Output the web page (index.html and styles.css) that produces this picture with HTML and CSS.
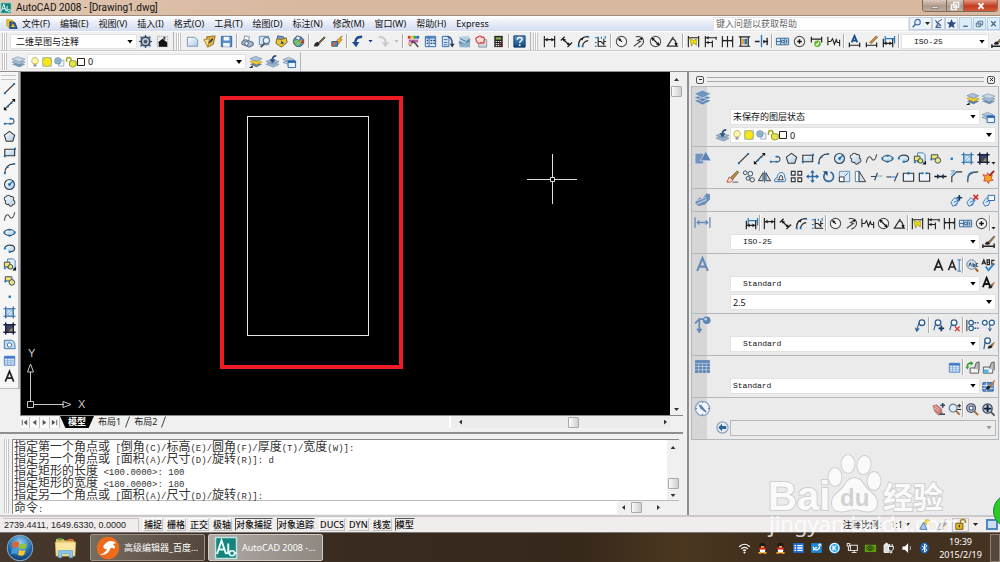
FILE: index.html
```html
<!DOCTYPE html>
<html lang="zh-CN">
<head>
<meta charset="utf-8">
<title>AutoCAD 2008 - [Drawing1.dwg]</title>
<link rel="stylesheet" href="styles.css">
</head>
<body>
<svg class="sprite" aria-hidden="true">
<defs>
<linearGradient id="g-page" x1="0" y1="0" x2="1" y2="1"><stop offset="0" stop-color="#fff"/><stop offset="1" stop-color="#a9cbe8"/></linearGradient>
<linearGradient id="g-help" x1="0" y1="0" x2="0" y2="1"><stop offset="0" stop-color="#5b9bd0"/><stop offset="1" stop-color="#0c3f78"/></linearGradient>
<radialGradient id="g-orb" cx=".5" cy=".3" r=".7"><stop offset="0" stop-color="#9ad4f2"/><stop offset=".6" stop-color="#2a6fae"/><stop offset="1" stop-color="#0d3767"/></radialGradient>
</defs>
<!-- draw -->
<symbol id="line" viewBox="0 0 16 16"><path d="M3 13 13 3" stroke="#333" stroke-width="1.3"/><path d="M2 12h2v2H2zM12 2h2v2h-2z" fill="#1673c4"/></symbol>
<symbol id="xline" viewBox="0 0 16 16"><path d="M3 13 13 3" stroke="#222" stroke-width="1.3"/><path d="M2 14v-3.500l3.500 3.500zM14 2v3.500L10.500 2z" fill="#111"/><path d="M5.500 9h2v2h-2zM9 5.500h2v2H9z" fill="#1673c4"/></symbol>
<symbol id="pline" viewBox="0 0 16 16"><path d="M3 11.500h8a3 3 0 0 0 0-5.500H9" fill="none" stroke="#456" stroke-width="1.200"/><path d="M2 10.500h2v2H2zM8 10.500h2v2H8zM8 5h2.500v2H8z" fill="#1673c4"/></symbol>
<symbol id="poly" viewBox="0 0 16 16"><path d="M8 2.500 13.500 6.500 11.500 13h-7L2.500 6.500z" fill="url(#g-page)" stroke="#333" stroke-width="1.100"/></symbol>
<symbol id="rect" viewBox="0 0 16 16"><path d="M3 4.500h10.500v7H3z" fill="url(#g-page)" stroke="#333" stroke-width="1.200"/><path d="M2 11h2v2H2zM13 3h2v2h-2z" fill="#1673c4"/></symbol>
<symbol id="arc" viewBox="0 0 16 16"><path d="M3 13C3 7 7 3 13 3" fill="none" stroke="#333" stroke-width="1.300"/><path d="M2 12h2v2H2zM12 2h2v2h-2zM5 5.500h2v2H5z" fill="#1673c4"/></symbol>
<symbol id="circ" viewBox="0 0 16 16"><circle cx="8" cy="8" r="5.300" fill="url(#g-page)" stroke="#345" stroke-width="1.200"/><path d="m8 8 3.500-3.500" stroke="#1673c4" stroke-width="1.300"/><circle cx="8" cy="8" r="1.500" fill="#1673c4"/></symbol>
<symbol id="cloud" viewBox="0 0 16 16"><path d="M4 8.500C1.500 7.500 2 4 4.500 4 5 1.800 8.500 1.800 9 3.800c3-.8 4.500 1.700 3 3.700 2.500 1 2.500 5-.5 5C10.500 14.800 7.500 14.500 7 12c-2.500.8-4.500-1.500-3-3.500z" fill="url(#g-page)" stroke="#444" stroke-width="1.100"/></symbol>
<symbol id="spline" viewBox="0 0 16 16"><path d="M2.500 12.500C3.500 5 6.500 5 8 8s4.500 2 5.500-4.500" fill="none" stroke="#555" stroke-width="1.200"/></symbol>
<symbol id="ell" viewBox="0 0 16 16"><ellipse cx="8" cy="8" rx="5.500" ry="3.200" fill="url(#g-page)" stroke="#345" stroke-width="1.200"/><path d="M1.500 7h2v2h-2zM12.500 7h2v2h-2zM7 4h2v2H7zM7 10.500h2v2H7z" fill="#1673c4"/></symbol>
<symbol id="earc" viewBox="0 0 16 16"><path d="M3 8c0-5 10.500-4.500 10.500 0 0 2-2 3.300-4.500 3.500" fill="url(#g-page)" stroke="#345" stroke-width="1.200"/><path d="M2 7h2v2H2zM7 10.500h2.500v2H7z" fill="#1673c4"/></symbol>
<symbol id="ins" viewBox="0 0 16 16"><path d="M6 2h6l2 2v8H6z" fill="#e2eef8" stroke="#4d7fae"/><path d="M2.500 5.500h6v5h-6z" fill="#f2e36b" stroke="#345"/><circle cx="9" cy="10.500" r="2.500" fill="#dfe86a" stroke="#345"/><path d="M11 14.500h4v-4z" fill="#111"/><path d="M2 11h2v2H2z" fill="#1673c4"/></symbol>
<symbol id="blk" viewBox="0 0 16 16"><path d="M3.500 4h7v4.500h-7z" fill="#f2e36b" stroke="#346"/><circle cx="10.500" cy="10" r="3" fill="#e4e87a" stroke="#346"/><path d="M2.500 8h2v2h-2z" fill="#1673c4"/></symbol>
<symbol id="pt" viewBox="0 0 16 16"><path d="M7 7h2.500v2.500H7z" fill="#1673c4"/></symbol>
<symbol id="hatch" viewBox="0 0 16 16"><path d="M4 4h8v8H4z" fill="#cfe4f4"/><path d="m4 8 4-4M4 12l8-8M8 12l4-4M4 8l4 4M8 4l4 4" stroke="#7db0da"/><path d="M4 1.500v13M12 1.500v13M1.500 4h13M1.500 12h13" stroke="#2e6a9e" stroke-width="1.300"/></symbol>
<symbol id="grad" viewBox="0 0 16 16"><path d="M4 4h8v8H4z" fill="#3f4668"/><path d="m6 12 6-6v6z" fill="#a09a55"/><path d="M4 1.500v13M12 1.500v13M1.500 4h13M1.500 12h13" stroke="#1a2440" stroke-width="1.600"/></symbol>
<symbol id="region" viewBox="0 0 16 16"><path d="M2.500 3.500H10c2.500 0 4 2 4 9H2.500z" fill="#c5dbee" stroke="#3e74a8"/><circle cx="8" cy="8.500" r="2.300" fill="#fff" stroke="#3e74a8"/></symbol>
<symbol id="table" viewBox="0 0 16 16"><path d="M2.500 3.500h11v9.500h-11z" fill="#e4effa" stroke="#4a7dc0"/><path d="M3 3.500h10.500V6H3z" fill="#3d78c8"/><path d="M6 6v7M9.500 6v7M3 8.300h10.500M3 10.600h10.500" stroke="#86aedb"/></symbol>
<symbol id="mtext" viewBox="0 0 16 16"><path d="M3.500 13.500 8 2.500l4.500 11M5 9.800h6" fill="none" stroke="#222" stroke-width="1.800"/></symbol>
<!-- modify -->
<symbol id="erase" viewBox="0 0 16 16"><path d="m6 9 7-7 1.500 1.500-6.500 8z" fill="#c98a2b" stroke="#444" stroke-width=".7"/><path d="m4.500 8.500 4 3-2.500 2.500H2z" fill="#f7ddc8" stroke="#a33" stroke-width=".8"/><path d="M8 14h6" stroke="#555"/></symbol>
<symbol id="copy" viewBox="0 0 16 16"><g fill="#e8f0f7" stroke="#345"><circle cx="4.500" cy="4" r="2"/><circle cx="10" cy="5" r="2.500"/><circle cx="7.500" cy="10" r="2"/><circle cx="12" cy="11.500" r="2.300"/></g></symbol>
<symbol id="mirror" viewBox="0 0 16 16"><path d="M6.500 4v8.500h-5zM9.500 4v8.500h5z" fill="#cfdfed" stroke="#333"/><path d="M8 2v12.500" stroke="#1673c4"/></symbol>
<symbol id="offset" viewBox="0 0 16 16"><path d="M2 13.500c-1-3 1-4 2.500-4C4 4 11 1 12.500 7v2.500c2 1 1 4 0 4z" fill="#dbe9f5" stroke="#2e75b5"/><path d="M5 11.500c1 0 2-1 2-3s3-2 3 0 0 3 1 3z" fill="#fff" stroke="#333"/></symbol>
<symbol id="array" viewBox="0 0 16 16"><path d="M2.500 2.500h4v4h-4zM9.500 2.500h4v4h-4zM2.500 9.500h4v4h-4zM9.500 9.500h4v4h-4z" fill="#f5f8fb" stroke="#333" stroke-width="1.200"/></symbol>
<symbol id="move" viewBox="0 0 16 16"><path d="M8 2.500v11M2.500 8h11" stroke="#2a6aa5" stroke-width="1.500"/><path d="m8 1 2.300 3H5.700zM8 15l2.300-3H5.700zM1 8l3-2.300v4.600zM15 8l-3-2.300v4.600z" fill="#2a6aa5"/></symbol>
<symbol id="rotate" viewBox="0 0 16 16"><path d="M5 4a5.200 5.200 0 1 0 5-.8" fill="none" stroke="#2a6aa5" stroke-width="1.800"/><path d="M2 2.500h5v5z" fill="#1d4d80"/></symbol>
<symbol id="scale" viewBox="0 0 16 16"><path d="M2.500 2.500h11v11h-11z" fill="#dbe9f5" stroke="#5b8fbf"/><path d="M2.500 8.500h5v5h-5z" fill="#fff" stroke="#333"/><path d="m8 8 3.500-3.500" stroke="#1673c4"/></symbol>
<symbol id="stretch" viewBox="0 0 16 16"><path d="M2.500 2.500h4v11h-4z" fill="#fff" stroke="#4a80b0"/><path d="m6.500 2.500 7 11h-7z" fill="#cfe0ef" stroke="#333"/></symbol>
<symbol id="trim" viewBox="0 0 16 16"><path d="M2 8h5M6 12l3-8" stroke="#345" stroke-width="1.200"/><path d="M9 7.500h6" stroke="#3b8dd3" stroke-dasharray="2 1"/></symbol>
<symbol id="extend" viewBox="0 0 16 16"><path d="M1.500 8.500h5" stroke="#345" stroke-width="1.200"/><path d="M6.500 8.500h5" stroke="#3b8dd3" stroke-width="1.200"/><path d="m10 13 4-9" stroke="#345" stroke-width="1.200"/></symbol>
<symbol id="breakpt" viewBox="0 0 16 16"><path d="M2.500 4.500h11v8.500h-11z" fill="#eef4f9" stroke="#333" stroke-width="1.200"/><path d="M7 3h2v3H7z" fill="#1673c4"/></symbol>
<symbol id="brk" viewBox="0 0 16 16"><path d="M5.500 4.500h-3V13h11V4.500h-3" fill="#eef4f9" stroke="#333" stroke-width="1.200"/><path d="M5 3.500h2v2H5zM9 3.500h2v2H9z" fill="#1673c4"/></symbol>
<symbol id="join" viewBox="0 0 16 16"><path d="M1.500 8h13" stroke="#111" stroke-width="1.600"/><path d="m7.500 8-3-3v6zM8.500 8l3-3v6z" fill="#1c3550"/></symbol>
<symbol id="chamfer" viewBox="0 0 16 16"><path d="M3 14V8l5-5h6" fill="none" stroke="#333" stroke-width="1.200"/><path d="m3 8 5-5M2 2h4L2 6" fill="none" stroke="#3b8dd3"/></symbol>
<symbol id="fillet" viewBox="0 0 16 16"><path d="M3 14v-3C3 6 6 3 14 3" fill="none" stroke="#333" stroke-width="1.200"/><path d="M3 10c0-4 2-7 7-7" fill="none" stroke="#3b8dd3" stroke-width="1.400"/></symbol>
<symbol id="explode" viewBox="0 0 16 16"><path d="m3 13 1-4-2-3 4 1 1-3 2 3 3-1-1 4 2 2-4 .5-1 3-2-3z" fill="#f1a321" stroke="#c33" stroke-width=".8"/><path d="m9 7 5-5" stroke="#922" stroke-width="2"/></symbol>
<!-- standard -->
<symbol id="new" viewBox="0 0 16 16"><path d="M2.500 3.500h8l3 3v6.500h-11z" fill="url(#g-page)" stroke="#6f93b5"/></symbol>
<symbol id="open" viewBox="0 0 16 16"><path d="m5 3 9-1-2 9-6 3z" fill="#e9b642" stroke="#8b6a1d"/><path d="m2 6 6-1-2 9z" fill="#f7e08b" stroke="#a98429"/><path d="m11 4-4 5 1 1 4-4z" fill="#345"/></symbol>
<symbol id="save" viewBox="0 0 16 16"><path d="M2.500 2.500h11v11h-11z" fill="#5b8fcb" stroke="#33629c"/><path d="M5 3h6v4H5zM4.500 9.500h7v4h-7z" fill="#eef5fb"/></symbol>
<symbol id="print" viewBox="0 0 16 16"><path d="m5 2 5 1-1 5-5-1z" fill="#fff" stroke="#7a8fa8"/><path d="m2 8 4-2 8 3v3l-4 2-8-3z" fill="#a8b8cc" stroke="#4a5f7c"/><circle cx="7" cy="10" r="2" fill="#e6edf5" stroke="#4a5f7c"/></symbol>
<symbol id="preview" viewBox="0 0 16 16"><path d="M2.500 2.500h10v9h-10z" fill="#cfe4f5" stroke="#5587b5"/><circle cx="10" cy="7" r="3.300" fill="#e9f5fd" stroke="#5c7287" stroke-width="1.200"/><path d="m8 10-4 4" stroke="#4a5560" stroke-width="2"/></symbol>
<symbol id="publish" viewBox="0 0 16 16"><path d="m4 2 6 1 3 4-5 4-5-3z" fill="#7c9cc9" stroke="#3b5a86"/><path d="m3 5 5 1 5-2 1 5-6 5-6-4z" fill="#ecc532" stroke="#826718"/><path d="m8 7 3 3-4 1z" fill="#2f5688"/></symbol>
<symbol id="globe" viewBox="0 0 16 16"><circle cx="8" cy="8" r="5.500" fill="#4f93c2" stroke="#2f5d85"/><path d="M3 8c2-1 4-4 6-2l3 1c-1 3-3 4-4 6-3-1-4-2-5-5z" fill="#7fbf5b"/><path d="m6 2 4 1-1 4-4-2z" fill="#f0f5fa" stroke="#567"/><path d="m10 9 4-4v5z" fill="#c33"/></symbol>
<symbol id="brush" viewBox="0 0 16 16"><path d="m7 9 6-6 1 1-6 6z" fill="#a07b50" stroke="#443"/><path d="M2 13c1-4 3-5 5-4l1 1c0 3-3 4-6 3z" fill="#2a2a2a"/></symbol>
<symbol id="flash" viewBox="0 0 16 16"><path d="m9 6 5-4-2 4h2L9 12l1-4H8z" fill="#f3b32b" stroke="#a06a10" stroke-width=".7"/><path d="M3 8h6v5H3z" fill="#4b8ac0" stroke="#2d5a86"/><path d="m3 13 4-4" stroke="#e05b2b" stroke-width="2"/></symbol>
<symbol id="undo" viewBox="0 0 16 16"><path d="M13 3C7 3 5 6 6 11" fill="none" stroke="#1d4f8f" stroke-width="2.600"/><path d="M2 8.500h8L6.500 14z" fill="#1d4f8f"/></symbol>
<symbol id="redo" viewBox="0 0 16 16"><path d="M3 3c6 0 8 3 7 8" fill="none" stroke="#c8c8c8" stroke-width="2"/><path d="M14 9H6.500l3.500 5z" fill="#c8c8c8"/></symbol>
<symbol id="props" viewBox="0 0 16 16"><path d="M2 2h3v3H2z" fill="#d33"/><path d="M5 2h3v3H5z" fill="#ec3"/><path d="M8 2h3v3H8z" fill="#3a3"/><path d="M11 2h3v3h-3z" fill="#36c"/><path d="M3 6h10v3H3z" fill="#c55fae"/><path d="m4 13 3-5 3 2 3 4" fill="none" stroke="#444" stroke-width="1.600"/><path d="M2 9h4v3H2z" fill="#e0b48a"/></symbol>
<symbol id="dcenter" viewBox="0 0 16 16"><path d="M2.500 2.500h11v11h-11z" fill="#dceafa" stroke="#2f66a8"/><path d="M3 3h10.500v2H3z" fill="#4f86c6"/><path d="M6.500 3v10" stroke="#2f66a8"/><path d="M4 7h1.500M4 10h1.500M8 7h2M11 7h2M8 10h2M11 10h2" stroke="#246" stroke-width="1.500"/></symbol>
<symbol id="tpal" viewBox="0 0 16 16"><path d="M2.500 2.500h7v11h-7z" fill="#dceafa" stroke="#2f66a8"/><path d="M4 6h4M4 9h4M4 11.500h4" stroke="#36a"/><path d="M8 3c4 0 5 4 5 8" fill="none" stroke="#357" stroke-width="1.500"/><path d="m10.500 10.500 5 0-2.500 4z" fill="#234"/></symbol>
<symbol id="sheet" viewBox="0 0 16 16"><path d="m2 3 11-1 1 12H6z" fill="#b9cfe0"/><path d="m2 7 6 3 6-5v4l-5 5-7-4z" fill="#6b94b4"/><path d="m2 11 12-2v5H3z" fill="#8fb0c6"/><path d="m3 5 7 3 4-3" fill="none" stroke="#4d7695"/></symbol>
<symbol id="markup" viewBox="0 0 16 16"><path d="M5 6h8.500v8H5z" fill="#cfd6de" stroke="#8b97a5"/><path d="M3 8C1 6 2 3 4 3.500 5 1.500 8 2 8 3.500c3-1 4 2 2.500 3.500C12 9 9 10.500 8 9 6 10.500 3 10 3 8z" fill="#f7dede" stroke="#d33" stroke-width="1.200"/></symbol>
<symbol id="calc" viewBox="0 0 16 16"><path d="M3.500 2h9v12h-9z" fill="#222"/><path d="M5 3.500h6V6H5z" fill="#7fae55"/><path d="M5 8h1.500M7.300 8h1.500M9.600 8h1.500M5 10.200h1.500M7.300 10.200h1.500M5 12.400h1.500M7.300 12.400h1.500" stroke="#ddd" stroke-width="1.200"/><path d="M9.600 10.200h1.500M9.600 12.400h1.500" stroke="#e33" stroke-width="1.200"/></symbol>
<symbol id="help" viewBox="0 0 16 16"><path d="M2 2h12v12H2z" fill="url(#g-help)" stroke="#0f3b6e"/><path d="M5.700 6c0-3 5-3 5-.2C10.700 7.500 8.200 7.500 8.200 9.700" fill="none" stroke="#fff" stroke-width="1.600"/><path d="M7.300 11h1.800v1.700H7.300z" fill="#fff"/></symbol>
<symbol id="gear" viewBox="0 0 16 16"><path d="M2 2h12v12H2z" fill="#b8cbe0"/><circle cx="8" cy="8" r="4.500" fill="none" stroke="#3a4654" stroke-width="1.600"/><circle cx="8" cy="8" r="2" fill="#556"/><path d="M8 1v3M8 12v3M1 8h3M12 8h3M3 3l2 2M11 11l2 2M13 3l-2 2M5 11l-2 2" stroke="#3a4654" stroke-width="1.300"/></symbol>
<symbol id="wshome" viewBox="0 0 16 16"><path d="M2.500 2.500h11v11h-11z" fill="#e9edf2" stroke="#8a95a2" stroke-dasharray="1 1"/><path d="m3 9 5-4 5 4v4.500H4V9z" fill="#111"/><path d="M9 3h2v3H9z" fill="#333"/></symbol>
<!-- dimension -->
<symbol id="dlin" viewBox="0 0 16 16"><path d="M2.500 2v12M13.500 2v12M3 6h10" stroke="#222" stroke-width="1.200"/><path d="m3 6 3-2v4zM13 6l-3-2v4z" fill="#222"/></symbol>
<symbol id="dali" viewBox="0 0 16 16"><path d="m4 5 7 7M2 7l4-4M9 14l5-5" stroke="#222" stroke-width="1.400"/><path d="m4 5 3.500.8L5 8.300zM11.500 12l-3.300-.7 2.500-2.500z" fill="#111"/></symbol>
<symbol id="darc" viewBox="0 0 16 16"><path d="M2.500 13C2.500 7 6 3 13 2.500M7 13c0-3 3-6 6-6" fill="none" stroke="#222" stroke-width="1.200"/><path d="M2 12h2v2H2zM12 2h2v2h-2zM6 12h2v2H6z" fill="#1673c4"/><path d="m5 5 3-1-1 3z" fill="#111"/></symbol>
<symbol id="dord" viewBox="0 0 16 16"><path d="M5.500 3v10h8.500M5.500 8h3l3 3V5M12 8h2" fill="none" stroke="#222" stroke-width="1.200"/><path d="M2 4h3M2 9h2M9 3v2M13 2v3M2 13h2" stroke="#1673c4" stroke-width="1.200"/></symbol>
<symbol id="drad" viewBox="0 0 16 16"><circle cx="8" cy="8" r="5.500" fill="#f4f4f4" stroke="#555" stroke-width="1.200"/><path d="M8.500 8.500 5 5" stroke="#111" stroke-width="1.200"/><path d="m4.500 4.500 3.300.8-2.400 2.400z" fill="#111"/></symbol>
<symbol id="djog" viewBox="0 0 16 16"><path d="M5 3c10-2 11 8 3 11M12 4 7 7l3 1-7 5" fill="none" stroke="#444" stroke-width="1.200"/><path d="m12.500 3.500-1 3.200-2.200-2z" fill="#111"/></symbol>
<symbol id="ddia" viewBox="0 0 16 16"><circle cx="8" cy="8" r="5.500" fill="#f4f4f4" stroke="#555" stroke-width="1.200"/><path d="m4 4 8 8" stroke="#111" stroke-width="1.200"/><path d="m4 4 3.400.8L4.800 7.400zM12 12l-3.400-.8 2.600-2.600z" fill="#111"/></symbol>
<symbol id="dang" viewBox="0 0 16 16"><path d="M9 3 2.500 13H14M7 5c3 0 5 3 5 8" fill="none" stroke="#333" stroke-width="1.300"/><path d="m12 13-2-3.500h3.500z" fill="#111"/></symbol>
<symbol id="dqk" viewBox="0 0 16 16"><path d="M2.500 2v12M13.500 2v12M3 4h10" stroke="#222" stroke-width="1.200"/><path d="m4 4 4 3 3-2v7l-3-3-2 4z" fill="#f5e400" stroke="#77701a" stroke-width=".6"/></symbol>
<symbol id="dbase" viewBox="0 0 16 16"><path d="M2.500 2v12M3 4h11M3 9h7M10 7v7M14 3v3" stroke="#222" stroke-width="1.200"/><path d="m3 4 3-1.800v3.600zM3 9l3-1.800v3.600z" fill="#222"/></symbol>
<symbol id="dcont" viewBox="0 0 16 16"><path d="M2.500 2v12M8 2v12M13.500 2v12M3 7h10" stroke="#222" stroke-width="1.200"/><path d="m5 7-2-1.500v3zM11 7l2-1.500v3zM6 7l2-1.500v3z" fill="#222"/></symbol>
<symbol id="dspace" viewBox="0 0 16 16"><path d="M2 3h12M2 13h12M4 3v10M12 3v10" stroke="#222" stroke-width="1.200"/><path d="M5 5h3v6H5z" fill="#e2a23a"/><path d="M8 5h3v6H8z" fill="#356fae"/></symbol>
<symbol id="dbrk" viewBox="0 0 16 16"><path d="M8 1v13" stroke="#2e78bd" stroke-width="1.500"/><path d="M1 8h5M10 8h5M14 4v8" stroke="#222" stroke-width="1.400"/><path d="m13 8-3-2v4z" fill="#222"/></symbol>
<symbol id="tol" viewBox="0 0 16 16"><path d="M1.500 4.500h13v7h-13z" fill="#d6e7f6" stroke="#33669b"/><path d="M6 4.500v7M10.500 4.500v7M2 8h4" stroke="#33669b"/><circle cx="8.300" cy="8" r="1.500" fill="none" stroke="#246"/><path d="M12.500 6v4" stroke="#246"/></symbol>
<symbol id="cmark" viewBox="0 0 16 16"><circle cx="8" cy="8" r="5.500" fill="#f4f4f4" stroke="#555" stroke-width="1.200"/><path d="M8 5.500v5M5.500 8h5" stroke="#111" stroke-width="1.500"/></symbol>
<symbol id="insp" viewBox="0 0 16 16"><path d="M2.500 3v6M13.500 3v6M3 5.500h10" stroke="#222" stroke-width="1.300"/><circle cx="9" cy="10.500" r="3.500" fill="#65b52c"/><path d="m7.300 10.500 1.300 1.400 2-3" fill="none" stroke="#fff" stroke-width="1.200"/></symbol>
<symbol id="djl" viewBox="0 0 16 16"><path d="M2 3v9M2 8h3l2-3 2 6 2-5 1 3h2M14.500 6v7" fill="none" stroke="#222" stroke-width="1.200"/></symbol>
<symbol id="dedit" viewBox="0 0 16 16"><path d="M5 9 8 2l3 7M6 7h4" fill="none" stroke="#17508f" stroke-width="1.900"/><path d="M2.500 9v5M13.500 9v5M3 12h10" stroke="#222" stroke-width="1.300"/></symbol>
<symbol id="dted" viewBox="0 0 16 16"><path d="m6 9 7-7 1.500 1.500L8 10z" fill="#d98b2b" stroke="#653" stroke-width=".7"/><path d="M2.500 9v5M13.500 9v5M3 12h10" stroke="#222" stroke-width="1.300"/></symbol>
<symbol id="dupd" viewBox="0 0 16 16"><path d="M4.500 2v8M14.500 2v8M5 5h9" stroke="#2e78bd" stroke-width="1.300"/><path d="M2.500 5v9M12.500 5v9M3 10h9" stroke="#222" stroke-width="1.300"/><path d="m3 10 3-2v4zM12 10l-3-2v4z" fill="#222"/></symbol>
<symbol id="dsty" viewBox="0 0 16 16"><path d="m8 8 6-6 .8 1L10 9z" fill="#a8794b" stroke="#443" stroke-width=".6"/><path d="M4 11c1-3 3-4 5-2s-2 3-5 2z" fill="#222"/><path d="M2 11v4M14 10v5M2 13h12" stroke="#222" stroke-width="1.500"/></symbol>
<!-- layers -->
<symbol id="lay" viewBox="0 0 16 16"><path d="m1 11 6-2.500 8 2.500-6 3z" fill="#7895b5"/><path d="m1 8.500 6-2.500 8 2.500-6 3z" fill="#a9bfd6" stroke="#6784a5" stroke-width=".6"/><path d="m1 5.500 6-2.500 8 2.500-6 3z" fill="#c8d7e6" stroke="#6784a5" stroke-width=".6"/></symbol>
<symbol id="laymk" viewBox="0 0 16 16"><path d="m2 11 6-2.500 7 2.500-6 3z" fill="#5e7fa5"/><path d="m2 8 6-2 7 2.500-6 3z" fill="#f1cf2e" stroke="#b29112" stroke-width=".6"/><path d="m2 5 6-2.500 7 2.500-6 3z" fill="#a9bfd6" stroke="#6784a5" stroke-width=".6"/><path d="m1 15 4-3v3z" fill="#123"/></symbol>
<symbol id="layprev" viewBox="0 0 16 16"><path d="m1 11 6-2.500 8 2.500-6 3zM1 8l6-2.500L15 8l-6 3z" fill="#9fb6cf" stroke="#6784a5" stroke-width=".6"/><path d="M12 2C9 2 8 4 8 6" fill="none" stroke="#2f5580" stroke-width="2"/><path d="M5 5.500h6L8 10z" fill="#2f5580"/></symbol>
<symbol id="layst" viewBox="0 0 16 16"><path d="m1 9 5-2 5 2-5 2zM1 6l6-2.500L13 6 7 8z" fill="#b9cbdd" stroke="#6784a5" stroke-width=".6"/><path d="M6.500 7.500h8v7h-8z" fill="#e9f3fc" stroke="#2a67a8"/><path d="M6.500 7h8v2.500h-8z" fill="#2a67a8"/></symbol>
<symbol id="bulb" viewBox="0 0 16 16"><path d="M5.500 10.500C2 7 4 2 8 2s6 5 2.500 8.500z" fill="#fdf6b4" stroke="#b5a234"/><path d="M6 11h4v3H6z" fill="#8b95a2"/></symbol>
<symbol id="sun" viewBox="0 0 16 16"><path d="M1.500 1.500h13v13h-13z" fill="#a9c9dd"/><circle cx="8" cy="8" r="6" fill="#f6e61c" stroke="#b0a322" stroke-width=".8"/></symbol>
<symbol id="vpf" viewBox="0 0 16 16"><path d="M7.500 5.500h7v8h-7z" fill="#eef2f6" stroke="#8fa3b6"/><circle cx="6.500" cy="6.500" r="4.300" fill="#aac3d6" stroke="#5e87a8"/><path d="M6.500 2v9M2 6.500h9M3.500 3.500l6 6M9.500 3.500l-6 6" stroke="#7ba3c0" stroke-width=".8"/></symbol>
<symbol id="lock" viewBox="0 0 16 16"><path d="M2 8V5c0-4 6-4 6 0v2" fill="none" stroke="#a5a51e" stroke-width="2"/><path d="m6 7 4-1 5 1v6l-5 2-4-2z" fill="#e3e04a" stroke="#848416"/></symbol>
<symbol id="swatch" viewBox="0 0 9 12"><path d="M.5 2.500h7v7h-7z" fill="#fff" stroke="#222"/></symbol>
<!-- palette headings -->
<symbol id="h-lay" viewBox="0 0 16 16"><path d="m0 11 8-3 8 3-8 4zM0 8l8-3 8 3-8 4z" fill="#5e86b0" stroke="#dfe6ee" stroke-width=".7"/><path d="m0 4.500 8-3.500 8 3.500-8 4z" fill="#6d94bd" stroke="#dfe6ee" stroke-width=".7"/></symbol>
<symbol id="h-draw" viewBox="0 0 16 16"><path d="M1 4h8v10H1z" fill="#7394bd" stroke="#dde5ee" stroke-width=".6"/><path d="m11 2 5 9H6z" fill="#5b82b3" stroke="#dde5ee" stroke-width=".6"/></symbol>
<symbol id="h-3d" viewBox="0 0 16 16"><path d="m1 11 4-5 3 1 4-5 3 1v5l-5 5-6 1z" fill="#6b8fb9"/><path d="m3 9 8-3M3 12l9-4" stroke="#c7d5e4"/></symbol>
<symbol id="h-dim" viewBox="0 0 16 16"><path d="M1 3v10M15 3v10M3 8h10M5 6 3 8l2 2M11 6l2 2-2 2" fill="none" stroke="#6489b8" stroke-width="1.200"/></symbol>
<symbol id="h-txt" viewBox="0 0 16 16"><path d="M3 14 8 2l5 12M5 10h6" fill="none" stroke="#6489b8" stroke-width="1.900"/></symbol>
<symbol id="h-ldr" viewBox="0 0 16 16"><path d="M1 7c2-2 3-3 4-4h6M5 3v11M3 12l2 3 2-3" fill="none" stroke="#6489b8" stroke-width="1.600"/><circle cx="12" cy="4" r="3.600" fill="#5f86b4"/><circle cx="11" cy="3" r="1.200" fill="#c5d6ea"/></symbol>
<symbol id="h-tbl" viewBox="0 0 16 16"><path d="M1 2h14v12H1z" fill="#5f86b4"/><path d="M4.500 5v9M8 5v9M11.500 5v9M1 5h14M1 8h14M1 11h14" stroke="#c3d1e0" stroke-width=".7"/></symbol>
<symbol id="h-nav" viewBox="0 0 16 16"><circle cx="8" cy="8" r="6.700" fill="#f2f6fa" stroke="#8ca7c4" stroke-width="1.300"/><path d="m4 4 3 1 5 6-1 1-5-4z" fill="#5b82b0"/><path d="M8 1v2M8 13v2M1 8h2M13 8h2" stroke="#6489b8"/></symbol>
<!-- palette tools -->
<symbol id="s3a" viewBox="0 0 16 16"><path d="m2 10 4-5 4 3-2 5-4 1zM5 10l6-3M6 13l5-5" fill="#dcebf8" stroke="#3a7ab5"/><path d="M11 2v6M8 5h6" stroke="#123c66" stroke-width="1.700"/></symbol>
<symbol id="s3x" viewBox="0 0 16 16"><path d="m2 10 4-5 4 3-2 5-4 1zM5 10l6-3M6 13l5-5" fill="#dcebf8" stroke="#3a7ab5"/><path d="m9 2 5 5M14 2 9 7" stroke="#d22" stroke-width="1.600"/></symbol>
<symbol id="s3w" viewBox="0 0 16 16"><path d="m2 10 4-5 4 3-2 5-4 1zM5 10l6-3" fill="#dcebf8" stroke="#3a7ab5"/><path d="M7.500 2.500h7v5.500h-7z" fill="#f3f8fd" stroke="#2a67a8"/></symbol>
<symbol id="ai" viewBox="0 0 16 16"><path d="m1.500 13 4-10 4 10M3 9.500h5" fill="none" stroke="#222" stroke-width="1.600"/><path d="M11 2h4M13 2v12M11 14h4" stroke="#2e78bd"/></symbol>
<symbol id="fabc" viewBox="0 0 16 16"><circle cx="7" cy="7" r="5" fill="#d5e6f5" stroke="#678"/><path d="M4 9 5.500 5 7 9M8.500 5v4h2V7h-2M14 6h-2v3h2" fill="none" stroke="#246"/><path d="m11 11 3 3.500" stroke="#a05a2a" stroke-width="2"/></symbol>
<symbol id="abc" viewBox="0 0 16 16"><path d="M1 7 3 2l2 5M2 5.500h2M6.500 2v5h2.500V4.500H6.500 9V2zM14.500 2.500H11.500v4h3" fill="none" stroke="#222" stroke-width="1.200"/><path d="m5 9 3 4 5-6" fill="none" stroke="#3b85c5" stroke-width="2"/></symbol>
<symbol id="asty" viewBox="0 0 16 16"><path d="m2 12 4-10 4 10M4 8.500h4" fill="none" stroke="#111" stroke-width="2"/><path d="m10 9 5-3-3 6z" fill="#a3743f"/><path d="M8 13c0-3 2-4 4-2 0 2-2 3-4 2z" fill="#222"/></symbol>
<symbol id="ldr" viewBox="0 0 16 16"><circle cx="9.500" cy="5" r="3" fill="#fff" stroke="#2b5f93" stroke-width="1.400"/><path d="M6.500 5 4 13M2.500 10.500 4 14l2.500-3" fill="none" stroke="#2b5f93" stroke-width="1.200"/></symbol>
<symbol id="ldra" viewBox="0 0 16 16"><circle cx="7.500" cy="5" r="3" fill="#fff" stroke="#2b5f93" stroke-width="1.400"/><path d="M5 6 3 13" stroke="#2b5f93" stroke-width="1.200"/><path d="M11 8v6M8 11h6" stroke="#123c66" stroke-width="1.900"/></symbol>
<symbol id="ldrx" viewBox="0 0 16 16"><circle cx="7.500" cy="5" r="3" fill="#fff" stroke="#2b5f93" stroke-width="1.400"/><path d="M5 6 3 13" stroke="#2b5f93" stroke-width="1.200"/><path d="m8.500 9 5 5M13.500 9l-5 5" stroke="#d33" stroke-width="1.500"/></symbol>
<symbol id="ldral" viewBox="0 0 16 16"><path d="M2 2v12" stroke="#222"/><circle cx="6.500" cy="5" r="2.400" fill="#fff" stroke="#2b5f93" stroke-width="1.300"/><circle cx="6.500" cy="11" r="2.400" fill="#fff" stroke="#2b5f93" stroke-width="1.300"/><path d="M10 5h2M13 5h1.500M10 11h2M13 11h1.500" stroke="#2b5f93" stroke-width="1.500"/></symbol>
<symbol id="ldrc" viewBox="0 0 16 16"><circle cx="4" cy="5" r="2.500" fill="#fff" stroke="#2b5f93" stroke-width="1.300"/><circle cx="11.500" cy="5" r="2.700" fill="#fff" stroke="#2b5f93" stroke-width="1.300"/><path d="M9.500 7v6M8 11l1.500 3 1.500-3" fill="none" stroke="#2b5f93"/></symbol>
<symbol id="ldrs" viewBox="0 0 16 16"><circle cx="7" cy="5" r="3" fill="#fff" stroke="#2b5f93" stroke-width="1.400"/><path d="M4.500 6 3 14" stroke="#2b5f93" stroke-width="1.200"/><path d="m10 9 5-3-3 6z" fill="#a3743f"/><path d="M7 13c1-3 3-4 5-2 0 2-3 3-5 2z" fill="#222"/></symbol>
<symbol id="tupd" viewBox="0 0 16 16"><path d="M5.500 8.500h9v5.500h-9z" fill="#f4f4f4" stroke="#555"/><path d="M2.500 7c0-3 2-4 4-3.500" fill="none" stroke="#2f9e2f" stroke-width="1.800"/><path d="m6 1 3 2.500L6 6zM.5 7h4l-2 3z" fill="#2f9e2f"/><path d="m10 9 2-6 3-1v9" fill="#bbb" stroke="#555"/></symbol>
<symbol id="tlnk" viewBox="0 0 16 16"><path d="M2.500 7.500h10v6.500h-10z" fill="#f4f4f4" stroke="#555"/><path d="M3 10h5v4H3z" fill="#5ab0e8"/><path d="m9 9 2-6 3-1v9" fill="#bbb" stroke="#555"/></symbol>
<symbol id="tsty" viewBox="0 0 16 16"><path d="M2 5h11v9H2z" fill="#5f93cf" stroke="#2c5c98"/><path d="M2 8h11M2 11h11M6 5v9" stroke="#dbe8f6"/><path d="m9 8 5-6 1 1-4 7z" fill="#b5793f"/><path d="M5 12c1-4 3-5 5-3 0 3-3 4-5 3z" fill="#222"/></symbol>
<symbol id="pan" viewBox="0 0 16 16"><path d="M2 4 6 3l5 4 1 5-4 2-4-4z" fill="#c97f78" stroke="#9f6a66" stroke-width=".7"/><path d="M4 4 9 8M3 6l5 4" stroke="#f1c1ba"/><path d="M12.500 1v5M10 3.500h5M9 13h6" stroke="#2d4a6b" stroke-width="1.700"/></symbol>
<symbol id="zrt" viewBox="0 0 16 16"><circle cx="6.500" cy="6.500" r="4.200" fill="#dcecf8" stroke="#678" stroke-width="1.200"/><path d="m9.500 9.500 4 4" stroke="#a9672f" stroke-width="2"/><path d="M13 2v4M11 4h4M11 8h4" stroke="#111"/></symbol>
<symbol id="zwin" viewBox="0 0 16 16"><circle cx="6.500" cy="6.500" r="4.700" fill="#b9cfe2" stroke="#445" stroke-width="1.200"/><path d="M4.500 4.500h4v4h-4z" fill="#fff" stroke="#236"/><path d="m10 10 4 4" stroke="#a9672f" stroke-width="2"/></symbol>
<symbol id="zext" viewBox="0 0 16 16"><circle cx="7" cy="7" r="5" fill="#b9cfe2" stroke="#445" stroke-width="1.200"/><path d="M7 3v8M3 7h8" stroke="#123" stroke-width="2"/><path d="m10.500 10.500 4 4" stroke="#555" stroke-width="2"/></symbol>
<symbol id="back" viewBox="0 0 16 16"><circle cx="8" cy="8" r="6" fill="#e3ebf3" stroke="#8aa0b8" stroke-width="1.200"/><path d="m3.500 8 4-4v2.500H12v3H7.500V12z" fill="#2f6296"/></symbol>
<!-- title, menu and status -->
<symbol id="acad" viewBox="0 0 16 16"><path d="M1 1h14v14H1z" fill="#15847c" stroke="#bfe5e1"/><path d="m2 12 3-9 3 9M3 9h4M9.500 5v7M8 11.500h7" fill="none" stroke="#e9fffd" stroke-width="1.300"/><circle cx="12" cy="11.500" r="1.700" fill="#15847c" stroke="#e9fffd"/></symbol>
<symbol id="dwg" viewBox="0 0 16 16"><path d="m1 2 8 1 2 4-6 7-4-4z" fill="#f0c22e" stroke="#a77c10" stroke-width=".7"/><path d="m5 5 7 1 3 8H5z" fill="#2c5f96" stroke="#173d69"/><path d="m7 12 2-5 3 5z" fill="#f0c22e"/></symbol>
<symbol id="mag" viewBox="0 0 16 16"><circle cx="9.500" cy="6" r="4" fill="#e2effa" stroke="#3b6da6" stroke-width="1.600"/><path d="m6.500 9-4 4.500" stroke="#3b6da6" stroke-width="2.200"/></symbol>
<symbol id="dish" viewBox="0 0 16 16"><path d="M3 2c1 6 4 8 9 8z" fill="#3c6aa5"/><path d="m7 8-3 6h8M7 6l6-4M4 12l8-1" fill="none" stroke="#2b4c7c" stroke-width="1.300"/></symbol>
<symbol id="star" viewBox="0 0 16 16"><path d="m8 1.500 2 4.700 5 .4-3.800 3.300L12.400 15 8 12.200 3.600 15l1.200-5.100L1 6.600l5-.4z" fill="#2d4f86"/></symbol>
<symbol id="padl" viewBox="0 0 16 16"><path d="M8 6V4c0-3 6-3 6 0v2" fill="none" stroke="#a5821d" stroke-width="1.800"/><path d="M2 6.500h9V14H2z" fill="#dfb524" stroke="#5d4808"/><path d="M6 8.500h1.300v3H6z" fill="#222"/></symbol>
<symbol id="ascale" viewBox="0 0 16 16"><path d="m2 14 5-9 4 9z" fill="#a9c7e8" stroke="#3a6fae"/><circle cx="11.500" cy="5" r="3" fill="#f7e04a" stroke="#c7a71f"/></symbol>
<symbol id="aauto" viewBox="0 0 16 16"><path d="m2 14 5-8 3 8z" fill="#dbe3ec" stroke="#8b97a8"/><path d="m8 7 5-5-1 5h2l-5 5 1-4z" fill="#b9bec6" stroke="#888"/></symbol>
<!-- taskbar -->
<symbol id="orb" viewBox="0 0 32 32"><circle cx="16" cy="16" r="14.500" fill="url(#g-orb)" stroke="#7fa7c4" stroke-width="1.200"/><path d="M8 10c3-2 5-1.500 7 0l-1 6c-2-1.500-4-1.500-7 0z" fill="#e8602c"/><path d="M16 10.500c3 1.500 5 1.500 8 0l-1.500 6c-3 1-5 1-7.500-.5z" fill="#8cc63e"/><path d="M6.800 17.500c3-1.500 5-1 7 0l-1 6c-2-1.500-4-1.500-7.500 0z" fill="#3f9be0"/><path d="M15 18c3 1.500 4.500 1.500 7.300.3l-1.600 5.700c-3 1.200-5 1-7-.4z" fill="#fbc52f"/></symbol>
<symbol id="folder" viewBox="0 0 32 32"><path d="M4 5h9l2 2h12v20H4z" fill="#e9c96a"/><path d="M6 4h6v3H6z" fill="#5ba843"/><path d="M19 5h7v3h-7z" fill="#d56b3a"/><path d="M3 9h26l-1 18H4z" fill="#f8e5a0" stroke="#d9b95a"/><path d="M7 29v-9h18v9h-4v-5H11v5z" fill="#8cc6ea" stroke="#5fa3cf"/></symbol>
<symbol id="uc" viewBox="0 0 32 32"><circle cx="16" cy="16" r="15" fill="#ee6b1c"/><path d="M5 25c5-1 8-4 10-8-4 1-6-1-5-4 4-6 12-9 17-3-2-1-4 0-4 2 3 1 3 4 1 5-2-2-4-2-5 0-2 6-7 9-14 8z" fill="#fff"/></symbol>
<symbol id="wifi" viewBox="0 0 16 16"><path d="M1.500 6.500c4-4 9-4 13 0M4 9c2.500-2.500 5.500-2.500 8 0M6.200 11.200c1.200-1 2.400-1 3.600 0" fill="none" stroke="#fff" stroke-width="1.600"/><circle cx="8" cy="13.500" r="1.200" fill="#fff"/></symbol>
<symbol id="qq" viewBox="0 0 16 16"><path d="M8 1.500c-5 0-3 5-5.500 9.500L8 14.500l5.500-3.500C11 6.500 13 1.500 8 1.500z" fill="#1a1a1a"/><ellipse cx="8" cy="10.500" rx="3.500" ry="3.500" fill="#fff"/><path d="M3.500 7.500h9V10h-9z" fill="#e02020"/><path d="M3 13h4v2H3zM9 13h4v2H9zM6 5.500h4V7H6z" fill="#f5a71c"/></symbol>
<symbol id="t-list" viewBox="0 0 16 16"><path d="M1.500 2h13v12h-13z" fill="#1f6fd4"/><path d="M3 5h2M6.500 5H13M3 8h2M6.500 8H13M3 11h2M6.500 11H13" stroke="#fff" stroke-width="1.600"/></symbol>
<symbol id="t-sync" viewBox="0 0 16 16"><path d="M1.500 2h13v12h-13z" fill="#1b87dd"/><path d="M4 6c0 6 8 6 8-1M4 11c1-3 3-4 5-3M10 5l2-2 2 2" fill="none" stroke="#fff" stroke-width="1.400"/></symbol>
<symbol id="t-k" viewBox="0 0 16 16"><circle cx="8" cy="8" r="6.800" fill="#2b9fe8"/><circle cx="8" cy="8" r="5.500" fill="none" stroke="#fff" stroke-width="1.400"/><path d="M6.200 5v6M10 5 7 8l3 3" fill="none" stroke="#fff" stroke-width="1.500"/></symbol>
<symbol id="t-net" viewBox="0 0 16 16"><path d="M5.500 4.500H14V11H5.500zM7 13.500h6M10 11v2M1.500 2.500h3v3h-3zM3 6v5h2" fill="none" stroke="#ddd" stroke-width="1.300"/></symbol>
<symbol id="t-nv" viewBox="0 0 16 16"><path d="M1 4h14v9H1z" fill="#5e9a12"/><path d="M3 8.500c2-4 7-4 9 0-2 3-6 3.500-9 0zM5 8.500c2-2 4-1 5 0-2 2-3 1-5 0" fill="none" stroke="#1f3a05" stroke-width="1.200"/></symbol>
<symbol id="t-pow" viewBox="0 0 16 16"><path d="M2.500 4h6v9.500h-6zM4.500 2h2v2h-2z" fill="#ddd" stroke="#fff"/><path d="M8 6h6v3.500l-2 1.500v3h-2v-3L8 9.500zM9.500 3v3M12.500 3v3" fill="#333" stroke="#fff" stroke-width="1.200"/></symbol>
<symbol id="t-vol" viewBox="0 0 16 16"><path d="M3 6h3l4-4v12l-4-4H3z" fill="#fff"/><path d="M12 5.500c1.300 1.500 1.300 3.500 0 5" fill="none" stroke="#ccc"/></symbol>
<symbol id="t-bt" viewBox="0 0 16 16"><ellipse cx="8" cy="8" rx="5.500" ry="7" fill="#1a5db5"/><path d="m5 5.500 6 5L8 13V3l3 2.500-6 5" fill="none" stroke="#fff" stroke-width="1.200"/></symbol>
</svg>

<header class="titlebar">
  <svg class="ico-s"><use href="#acad"/></svg>
  <h1 class="title">AutoCAD 2008 - [Drawing1.dwg]</h1>
  <div class="winbtns">
    <button class="wb" aria-label="最小化"><svg viewBox="0 0 16 12"><path d="M4 7h8v2H4z" fill="#fff" stroke="#555" stroke-width=".7"/></svg></button>
    <button class="wb wb-mid" aria-label="还原"><svg viewBox="0 0 16 12"><path d="M6.500 1.500h6v6h-6zM3.500 4.500h6v6h-6z" fill="#bbb" stroke="#fff" stroke-width="1.400"/></svg></button>
    <button class="wb wb-close" aria-label="关闭"><svg viewBox="0 0 16 12"><path d="m5 2.500 6 7M11 2.500l-6 7" stroke="#fff" stroke-width="2.300"/></svg></button>
  </div>
</header>

<nav class="menubar">
  <svg class="ico-s"><use href="#dwg"/></svg>
  <button>文件(F)</button><button>编辑(E)</button><button>视图(V)</button><button>插入(I)</button><button>格式(O)</button><button>工具(T)</button><button>绘图(D)</button><button>标注(N)</button><button>修改(M)</button><button>窗口(W)</button><button>帮助(H)</button><button>Express</button>
  <div class="search">
    <input type="text" aria-label="键入问题以获取帮助" placeholder="键入问题以获取帮助">
    <button class="sb sb-wide" aria-label="搜索"><svg class="ico-s"><use href="#mag"/></svg><i class="caret-s"></i></button>
    <button class="sb" aria-label="通讯中心"><svg class="ico-s"><use href="#dish"/></svg></button>
    <button class="sb" aria-label="收藏夹"><svg class="ico-s"><use href="#star"/></svg></button>
    <button class="sb mdi" aria-label="最小化图形"><svg viewBox="0 0 12 12"><path d="M3.500 9h5" stroke="#4a6a8a" stroke-width="1.500"/></svg></button>
    <button class="sb mdi" aria-label="还原图形"><svg viewBox="0 0 12 12"><path d="M4.500 3.500h5v4h-5zM2.500 5.500h5v4h-5z" fill="#e3f1fb" stroke="#4a6a8a"/></svg></button>
    <button class="sb mdi" aria-label="关闭图形"><svg viewBox="0 0 12 12"><path d="m3.500 3.500 5 5.500M8.500 3.500l-5 5.500" stroke="#4a6a8a" stroke-width="1.400"/></svg></button>
  </div>
</nav>

<div class="bars">
  <div class="bar">
    <i class="grip"></i>
    <label class="combo combo-ws"><select aria-label="工作空间"><option>二维草图与注释</option></select></label>
    <button aria-label="工作空间设置"><svg><use href="#gear"/></svg></button><button aria-label="我的工作空间"><svg><use href="#wshome"/></svg></button>
  </div>
  <div class="bar">
    <i class="grip"></i>
    <button aria-label="新建"><svg><use href="#new"/></svg></button><button aria-label="打开"><svg><use href="#open"/></svg></button><button aria-label="保存"><svg><use href="#save"/></svg></button><i class="sep"></i><button aria-label="打印"><svg><use href="#print"/></svg></button><button aria-label="打印预览"><svg><use href="#preview"/></svg></button><button aria-label="发布"><svg><use href="#publish"/></svg></button><button aria-label="三维DWF"><svg><use href="#globe"/></svg></button><i class="sep"></i><button aria-label="特性匹配"><svg><use href="#brush"/></svg></button><button aria-label="块编辑器"><svg><use href="#flash"/></svg></button><i class="sep"></i><button aria-label="放弃"><svg><use href="#undo"/></svg></button><button class="drop" aria-label="放弃列表"><i class="caret-s blue"></i></button><button aria-label="重做"><svg><use href="#redo"/></svg></button><button class="drop" aria-label="重做列表"><i class="caret-s dim"></i></button><i class="sep"></i><button aria-label="特性"><svg><use href="#props"/></svg></button><button aria-label="设计中心"><svg><use href="#dcenter"/></svg></button><button aria-label="工具选项板"><svg><use href="#tpal"/></svg></button><button aria-label="图纸集"><svg><use href="#sheet"/></svg></button><button aria-label="标记集"><svg><use href="#markup"/></svg></button><button aria-label="计算器"><svg><use href="#calc"/></svg></button><i class="sep"></i><button aria-label="帮助"><svg><use href="#help"/></svg></button>
  </div>
  <div class="bar bar-last">
    <i class="grip"></i>
    <button aria-label="线性"><svg><use href="#dlin"/></svg></button><button aria-label="对齐"><svg><use href="#dali"/></svg></button><button aria-label="弧长"><svg><use href="#darc"/></svg></button><button aria-label="坐标"><svg><use href="#dord"/></svg></button><i class="sep"></i><button aria-label="半径"><svg><use href="#drad"/></svg></button><button aria-label="折弯"><svg><use href="#djog"/></svg></button><button aria-label="直径"><svg><use href="#ddia"/></svg></button><button aria-label="角度"><svg><use href="#dang"/></svg></button><i class="sep"></i><button aria-label="快速标注"><svg><use href="#dqk"/></svg></button><button aria-label="基线"><svg><use href="#dbase"/></svg></button><button aria-label="连续"><svg><use href="#dcont"/></svg></button><button aria-label="标注间距"><svg><use href="#dspace"/></svg></button><button aria-label="标注打断"><svg><use href="#dbrk"/></svg></button><i class="sep"></i><button aria-label="公差"><svg><use href="#tol"/></svg></button><button aria-label="圆心标记"><svg><use href="#cmark"/></svg></button><button aria-label="检验"><svg><use href="#insp"/></svg></button><button aria-label="折弯线性"><svg><use href="#djl"/></svg></button><i class="sep"></i><button aria-label="编辑标注"><svg><use href="#dedit"/></svg></button><button aria-label="编辑标注文字"><svg><use href="#dted"/></svg></button><button aria-label="标注更新"><svg><use href="#dupd"/></svg></button><i class="sep"></i>
    <label class="combo combo-dim mono indent"><select aria-label="标注样式"><option>ISO-25</option></select></label>
    <button aria-label="标注样式管理"><svg><use href="#dsty"/></svg></button>
  </div>
</div>

<div class="bars bars-2">
  <div class="bar">
    <i class="grip"></i>
    <button aria-label="图层特性"><svg><use href="#lay"/></svg></button>
    <label class="combo combo-lay"><svg><use href="#bulb"/></svg><svg><use href="#sun"/></svg><svg><use href="#vpf"/></svg><svg><use href="#lock"/></svg><svg class="sw"><use href="#swatch"/></svg><select aria-label="图层"><option>0</option></select></label>
    <button aria-label="置为当前"><svg><use href="#laymk"/></svg></button><button aria-label="上一个图层"><svg><use href="#layprev"/></svg></button><button aria-label="图层状态"><svg><use href="#layst"/></svg></button>
  </div>
</div>

<main class="main">
  <div class="left">
    <div class="work">
      <div class="drawbar">
        <i class="grip-h"></i>
        <button aria-label="直线"><svg><use href="#line"/></svg></button><button aria-label="构造线"><svg><use href="#xline"/></svg></button><button aria-label="多段线"><svg><use href="#pline"/></svg></button><button aria-label="正多边形"><svg><use href="#poly"/></svg></button><button aria-label="矩形"><svg><use href="#rect"/></svg></button><button aria-label="圆弧"><svg><use href="#arc"/></svg></button><button aria-label="圆"><svg><use href="#circ"/></svg></button><button aria-label="修订云线"><svg><use href="#cloud"/></svg></button><button aria-label="样条曲线"><svg><use href="#spline"/></svg></button><button aria-label="椭圆"><svg><use href="#ell"/></svg></button><button aria-label="椭圆弧"><svg><use href="#earc"/></svg></button><button aria-label="插入块"><svg><use href="#ins"/></svg></button><button aria-label="创建块"><svg><use href="#blk"/></svg></button><button aria-label="点"><svg><use href="#pt"/></svg></button><button aria-label="图案填充"><svg><use href="#hatch"/></svg></button><button aria-label="渐变色"><svg><use href="#grad"/></svg></button><button aria-label="面域"><svg><use href="#region"/></svg></button><button aria-label="表格"><svg><use href="#table"/></svg></button><button aria-label="多行文字"><svg><use href="#mtext"/></svg></button>
      </div>
      <div class="view">
        <div class="view-row">
          <div class="canvas">
            <svg class="drawing" role="img" aria-label="图形区">
              <rect x="201" y="26" width="179" height="269" fill="none" stroke="#ed1c24" stroke-width="4"/>
              <rect x="226.500" y="44.500" width="121" height="219" fill="none" stroke="#e6e6e6"/>
              <path d="M506 107.500h23M534 107.500h22M531.500 82v23M531.500 110v22M529.500 105.500h4v4h-4z" fill="none" stroke="#ddd"/>
              <g fill="none" stroke="#c8c8c8"><path d="M6.500 329.500h6v6h-6zM9.500 329v-29M13 332.500h30M9.500 292l-3 8h6zM50 332.500l-8-3v6z"/></g>
              <text x="7" y="285" class="axis">Y</text><text x="57" y="336" class="axis">X</text>
            </svg>
          </div>
          <div class="vscroll"><i class="tri up"></i><i class="thumb"></i><i class="tri down end"></i></div>
        </div>
        <div class="tabs">
          <button class="tn" aria-label="第一个"><svg viewBox="0 0 10 10"><path d="M2.500 2v6" stroke="#555"/><path d="M8 2v6L4 5z" fill="#555"/></svg></button><button class="tn" aria-label="上一个"><svg viewBox="0 0 10 10"><path d="M7 2v6L3 5z" fill="#555"/></svg></button><button class="tn" aria-label="下一个"><svg viewBox="0 0 10 10"><path d="M3 2v6l4-3z" fill="#555"/></svg></button><button class="tn" aria-label="最后一个"><svg viewBox="0 0 10 10"><path d="M2 2v6l4-3z" fill="#555"/><path d="M7.500 2v6" stroke="#555"/></svg></button>
          <button class="tab active">模型</button><button class="tab">布局1</button><svg class="slash" viewBox="0 0 5 12"><path d="M.5 11.500l4-11" stroke="#444"/></svg><button class="tab">布局2</button><svg class="slash" viewBox="0 0 5 12"><path d="M.5 11.500l4-11" stroke="#444"/></svg>
          <div class="hscroll hs-view"><i class="tri lf"></i><i class="thumb"></i><i class="tri rt"></i></div>
        </div>
      </div>
    </div>
    <section class="cmd">
      <i class="grip cmd-grip"></i>
      <div class="cmd-body">
        <div class="hist">
          <div class="lines">
            <p>指定第一个角点或<code> [</code>倒角<code>(C)/</code>标高<code>(E)/</code>圆角<code>(F)/</code>厚度<code>(T)/</code>宽度<code>(W)]:</code></p>
            <p>指定另一个角点或<code> [</code>面积<code>(A)/</code>尺寸<code>(D)/</code>旋转<code>(R)]: d</code></p>
            <p>指定矩形的长度<code> &lt;100.0000&gt;: 100</code></p>
            <p>指定矩形的宽度<code> &lt;180.0000&gt;: 180</code></p>
            <p>指定另一个角点或<code> [</code>面积<code>(A)/</code>尺寸<code>(D)/</code>旋转<code>(R)]:</code></p>
          </div>
          <div class="vscroll vs-cmd"><i class="tri up"></i><i class="thumb end"></i><i class="tri down"></i></div>
        </div>
        <div class="prompt">
          <label for="cmd">命令<code>:</code></label><input id="cmd" type="text">
          <div class="hscroll hs-cmd"><i class="tri lf"></i><i class="thumb"></i><i class="tri rt"></i></div>
        </div>
      </div>
    </section>
  </div>

  <aside class="dash">
    <div class="dash-head"><button aria-label="最小化面板"><svg viewBox="0 0 7 7"><path d="M2 3.500h3" stroke="#222"/></svg></button><i></i><button aria-label="关闭面板"><svg viewBox="0 0 7 7"><path d="m2 2 3 3M5 2 2 5" stroke="#222"/></svg></button></div>
    <div class="panel">
      <section class="sec">
        <svg class="head"><use href="#h-lay"/></svg>
        <div class="row tools"><button aria-label="置为当前"><svg><use href="#laymk"/></svg></button><button aria-label="图层"><svg><use href="#lay"/></svg></button></div>
        <div class="row"><label class="combo"><select aria-label="图层状态"><option>未保存的图层状态</option></select></label><button aria-label="图层状态管理"><svg><use href="#layst"/></svg></button></div>
        <div class="row row-lead"><button aria-label="上一个图层"><svg><use href="#layprev"/></svg></button><label class="combo"><svg><use href="#bulb"/></svg><svg><use href="#sun"/></svg><svg><use href="#vpf"/></svg><svg><use href="#lock"/></svg><svg class="sw"><use href="#swatch"/></svg><select aria-label="当前图层"><option>0</option></select></label></div>
      </section>
      <section class="sec">
        <svg class="head"><use href="#h-draw"/></svg>
        <div class="row tools"><button aria-label="直线"><svg><use href="#line"/></svg></button><button aria-label="构造线"><svg><use href="#xline"/></svg></button><button aria-label="多段线"><svg><use href="#pline"/></svg></button><button aria-label="正多边形"><svg><use href="#poly"/></svg></button><button aria-label="矩形"><svg><use href="#rect"/></svg></button><button aria-label="圆弧"><svg><use href="#arc"/></svg></button><button aria-label="圆"><svg><use href="#circ"/></svg></button><button aria-label="云线"><svg><use href="#cloud"/></svg></button><button aria-label="样条曲线"><svg><use href="#spline"/></svg></button><button aria-label="椭圆"><svg><use href="#ell"/></svg></button><button aria-label="椭圆弧"><svg><use href="#earc"/></svg></button><button aria-label="插入块"><svg><use href="#ins"/></svg></button><button aria-label="创建块"><svg><use href="#blk"/></svg></button><button aria-label="点"><svg><use href="#pt"/></svg></button><button aria-label="图案填充"><svg><use href="#hatch"/></svg></button><button aria-label="渐变色"><svg><use href="#grad"/></svg></button><i class="more"></i></div>
        <div class="row tools"><button aria-label="删除"><svg><use href="#erase"/></svg></button><button aria-label="复制"><svg><use href="#copy"/></svg></button><button aria-label="镜像"><svg><use href="#mirror"/></svg></button><button aria-label="偏移"><svg><use href="#offset"/></svg></button><button aria-label="阵列"><svg><use href="#array"/></svg></button><button aria-label="移动"><svg><use href="#move"/></svg></button><button aria-label="旋转"><svg><use href="#rotate"/></svg></button><button aria-label="缩放"><svg><use href="#scale"/></svg></button><button aria-label="拉伸"><svg><use href="#stretch"/></svg></button><button aria-label="修剪"><svg><use href="#trim"/></svg></button><button aria-label="延伸"><svg><use href="#extend"/></svg></button><button aria-label="打断于点"><svg><use href="#breakpt"/></svg></button><button aria-label="打断"><svg><use href="#brk"/></svg></button><button aria-label="合并"><svg><use href="#join"/></svg></button><button aria-label="倒角"><svg><use href="#chamfer"/></svg></button><button aria-label="圆角"><svg><use href="#fillet"/></svg></button><button aria-label="分解"><svg><use href="#explode"/></svg></button></div>
      </section>
      <section class="sec">
        <svg class="head"><use href="#h-3d"/></svg>
        <div class="row tools"><button aria-label="添加比例"><svg><use href="#s3a"/></svg></button><button aria-label="删除比例"><svg><use href="#s3x"/></svg></button><button aria-label="比例列表"><svg><use href="#s3w"/></svg></button></div>
      </section>
      <section class="sec">
        <svg class="head"><use href="#h-dim"/></svg>
        <div class="row tools"><button aria-label="标注更新"><svg><use href="#dupd"/></svg></button><i class="sep"></i><button aria-label="线性"><svg><use href="#dlin"/></svg></button><button aria-label="对齐"><svg><use href="#dali"/></svg></button><button aria-label="弧长"><svg><use href="#darc"/></svg></button><button aria-label="坐标"><svg><use href="#dord"/></svg></button><i class="sep"></i><button aria-label="半径"><svg><use href="#drad"/></svg></button><button aria-label="折弯"><svg><use href="#djog"/></svg></button><button aria-label="折弯线性"><svg><use href="#djl"/></svg></button><button aria-label="直径"><svg><use href="#ddia"/></svg></button><button aria-label="角度"><svg><use href="#dang"/></svg></button><i class="sep"></i><button aria-label="快速标注"><svg><use href="#dqk"/></svg></button><button aria-label="基线"><svg><use href="#dbase"/></svg></button><button aria-label="连续"><svg><use href="#dcont"/></svg></button><button aria-label="公差"><svg><use href="#tol"/></svg></button><button aria-label="圆心标记"><svg><use href="#cmark"/></svg></button><i class="sep"></i><i class="more"></i></div>
        <div class="row"><label class="combo mono indent"><select aria-label="标注样式"><option>ISO-25</option></select></label><button aria-label="标注样式管理"><svg><use href="#dsty"/></svg></button></div>
      </section>
      <section class="sec">
        <svg class="head"><use href="#h-txt"/></svg>
        <div class="row tools"><button aria-label="多行文字"><svg><use href="#mtext"/></svg></button><button aria-label="单行文字"><svg><use href="#ai"/></svg></button><i class="sep"></i><button aria-label="查找"><svg><use href="#fabc"/></svg></button><button aria-label="拼写检查"><svg><use href="#abc"/></svg></button></div>
        <div class="row"><label class="combo mono indent"><select aria-label="文字样式"><option>Standard</option></select></label><button aria-label="文字样式管理"><svg><use href="#asty"/></svg></button></div>
        <div class="row"><label class="combo"><select aria-label="文字高度"><option>2.5</option></select></label></div>
      </section>
      <section class="sec">
        <svg class="head"><use href="#h-ldr"/></svg>
        <div class="row tools"><button aria-label="多重引线"><svg><use href="#ldr"/></svg></button><i class="sep"></i><button aria-label="添加引线"><svg><use href="#ldra"/></svg></button><button aria-label="删除引线"><svg><use href="#ldrx"/></svg></button><i class="sep"></i><button aria-label="对齐引线"><svg><use href="#ldral"/></svg></button><button aria-label="合并引线"><svg><use href="#ldrc"/></svg></button></div>
        <div class="row"><label class="combo mono indent"><select aria-label="引线样式"><option>Standard</option></select></label><button aria-label="引线样式管理"><svg><use href="#ldrs"/></svg></button></div>
      </section>
      <section class="sec">
        <svg class="head"><use href="#h-tbl"/></svg>
        <div class="row tools"><button aria-label="表格"><svg><use href="#table"/></svg></button><i class="sep"></i><button aria-label="更新数据"><svg><use href="#tupd"/></svg></button><button aria-label="数据链接"><svg><use href="#tlnk"/></svg></button></div>
        <div class="row"><label class="combo mono"><select aria-label="表格样式"><option>Standard</option></select></label><button aria-label="表格样式管理"><svg><use href="#tsty"/></svg></button></div>
      </section>
      <section class="sec">
        <svg class="head"><use href="#h-nav"/></svg>
        <div class="row tools"><button aria-label="平移"><svg><use href="#pan"/></svg></button><button aria-label="实时缩放"><svg><use href="#zrt"/></svg></button><i class="sep"></i><button aria-label="窗口缩放"><svg><use href="#zwin"/></svg></button><button aria-label="范围缩放"><svg><use href="#zext"/></svg></button></div>
        <div class="row row-lead"><button aria-label="后退"><svg><use href="#back"/></svg></button><label class="combo off"><select aria-label="视图" disabled></select></label></div>
      </section>
    </div>
  </aside>
</main>

<footer class="status">
  <output class="coords">2739.4411, 1649.6330, 0.0000</output>
  <button>捕捉</button><button>栅格</button><button>正交</button><button>极轴</button><button class="on">对象捕捉</button><button class="on">对象追踪</button><button>DUCS</button><button>DYN</button><button>线宽</button><button class="on">模型</button>
  <div class="annot"><span>注释比例:</span><button class="ratio">1:1 <i class="caret-s"></i></button><svg><use href="#ascale"/></svg><svg><use href="#aauto"/></svg><button class="lockbtn" aria-label="锁定"><svg><use href="#padl"/></svg></button><i class="caret-s"></i><button class="full" aria-label="全屏显示"></button></div>
</footer>

<div class="taskbar">
  <button class="start" aria-label="开始"><svg><use href="#orb"/></svg></button>
  <button class="pin" aria-label="资源管理器"><svg><use href="#folder"/></svg></button>
  <button class="task"><svg><use href="#uc"/></svg><span>高级编辑器_百度...</span></button>
  <button class="task cur"><svg><use href="#acad"/></svg><span>AutoCAD 2008 -...</span></button>
  <div class="tray">
    <svg><use href="#wifi"/></svg><svg><use href="#qq"/></svg><svg><use href="#qq"/></svg><svg><use href="#t-list"/></svg><svg><use href="#t-sync"/></svg><svg><use href="#t-k"/></svg><svg><use href="#t-net"/></svg><svg><use href="#t-nv"/></svg><svg><use href="#t-pow"/></svg><svg><use href="#t-vol"/></svg><svg><use href="#t-bt"/></svg>
  </div>
  <div class="clock"><time>19:39</time><time>2015/2/19</time></div>
  <button class="peek" aria-label="显示桌面"></button>
</div>

<i class="ball"></i>
<svg class="mark" viewBox="0 0 190 96" aria-hidden="true">
  <text x="3" y="83" class="m-url">jingyan.baidu.com</text>
  <g class="mark-ink">
    <text x="2" y="61" class="m-bai">Bai</text>
    <ellipse cx="69" cy="28" rx="6.500" ry="9"/><ellipse cx="82" cy="15" rx="6.500" ry="9"/><ellipse cx="98" cy="16" rx="6.500" ry="9" transform="rotate(8 98 16)"/><ellipse cx="108" cy="32" rx="6.500" ry="9"/>
    <path d="M66 54c0-9 8-10 13-18 4-9 15-9 19 0 5 8 13 9 13 18 0 9-8 9-14 8-5-2-12-2-17 0-6 1-14 1-14-8z"/>
    <text x="117" y="59" class="m-cn">经验</text>
  </g>
  <text x="74" y="57" class="m-du">du</text>
</svg>
</body>
</html>
```

FILE: styles.css
```css
* { box-sizing: border-box; }
html, body { height: 100%; }
body {
  margin: 0;
  display: flex;
  flex-direction: column;
  position: relative;
  overflow: hidden;
  background: #f0f0f0;
  color: #222;
  font-family: "Noto Sans", "Noto Sans CJK SC", sans-serif;
  font-size: 9px;
  line-height: 12px;
}
button, input, select { font: inherit; color: inherit; margin: 0; padding: 0; border: 0; background: none; }
button { display: inline-flex; align-items: center; justify-content: center; flex: none; white-space: nowrap; }
svg { display: block; flex: none; }
p { margin: 0; }
.sprite { position: absolute; width: 0; height: 0; }
.ico-s { width: 12px; height: 12px; }

/* title */
.titlebar { display: flex; align-items: center; height: 16px; padding: 0 2px 0 0; gap: 4px; background: linear-gradient(90deg, #e0c6b1, #d8b89f 30%, #d8b89f); border-bottom: 1px solid #a08c7c; }
.title { flex: 1; margin: 0; font-family: Roboto, sans-serif; font-size: 10px; line-height: 14px; font-weight: 400; color: #111; }
.winbtns { display: flex; align-self: flex-start; height: 12px; border: 1px solid #7d6a5d; border-top: 0; border-radius: 0 0 4px 4px; overflow: hidden; }
.wb { width: 24px; height: 12px; background: linear-gradient(#dcc9bb, #b09a8a 50%, #c4ae9d); border-right: 1px solid #7d6a5d; }
.wb svg { width: 14px; height: 10px; }
.wb-mid { width: 17px; }
.wb-close { width: 33px; border: 0; background: linear-gradient(#e39a83, #c33b1f 50%, #d9603c); }

/* menu */
.menubar { display: flex; align-items: center; height: 15px; padding-left: 6px; background: linear-gradient(#fff, #e6ebf6 50%, #d4dcef); }
.menubar > button { margin-left: 10px; color: #111; }
.menubar > .ico-s + button { margin-left: 4px; }
.search { display: flex; align-items: center; margin-left: auto; height: 14px; }
.search input { width: 196px; height: 14px; padding: 0 2px; background: #fff; border: 1px solid #e3e6ea; }
.search input::placeholder { color: #666; opacity: 1; }
.sb { width: 13px; height: 13px; border: 1px solid #c3cfdf; background: #eef4fb; }
.sb-wide { width: 23px; gap: 3px; }
.sb svg { width: 11px; height: 11px; }
.mdi { background: #dcedf9; border-color: #b5cee2; }
.sb.mdi { margin-left: 1px; }
.caret-s { display: inline-block; flex: none; width: 5px; height: 3px; background: #222; clip-path: polygon(0 0, 100% 0, 50% 100%); }
.caret-s.blue { background: #239; }
.caret-s.dim { background: #bbb; }

/* toolbars */
.bars { display: flex; height: 20px; border-top: 1px solid #fafafa; border-bottom: 1px solid #c9c9c9; overflow: hidden; }
.bars-2 { height: 21px; border-bottom-color: #8f8f8f; }
.bar { display: flex; align-items: center; flex: none; padding: 0 2px; border-right: 1px solid #b5b5b5; }
.bar button, .drawbar button, .row button { width: 17px; height: 16px; }
.bar button svg, .drawbar svg, .row svg { width: 15px; height: 15px; }
.bar .drop { width: 9px; }
.bar-last { flex: 1 0 auto; border-right: 0; padding-right: 0; }
.grip { flex: none; width: 5px; height: 17px; margin-right: 3px; border: solid #c4c4c4; border-width: 0 1px; background: linear-gradient(90deg, #fff 1px, #c4c4c4 1px 2px, #fff 2px); }
.sep { flex: none; width: 2px; height: 14px; margin: 0 1px; border-left: 1px solid #aaa; background: #fff; }
.combo { position: relative; display: flex; align-items: center; min-width: 0; height: 15px; background: #fff; border: 1px solid #e2e2e2; }
.combo select { flex: 1; min-width: 0; appearance: none; height: 13px; line-height: 13px; padding: 0 14px 0 2px; color: #111; opacity: 1; }
.combo::after { content: ""; position: absolute; right: 3px; top: 5px; width: 6px; height: 4px; background: #000; clip-path: polygon(0 0, 100% 0, 50% 100%); pointer-events: none; }
.mono select { font-family: "Liberation Mono", monospace; font-size: 8px; }
.indent select { padding-left: 12px; }
.combo svg { width: 12px; height: 12px; }
.combo svg.sw { width: 9px; height: 12px; }
.combo-ws { width: 127px; }
.combo-ws select { padding-left: 5px; }
.combo-dim { width: 88px; }
.combo-lay { width: 219px; padding-left: 1px; margin-right: 1px; }

/* workspace */
.main { flex: 1; display: flex; min-height: 0; }
.left { flex: 1; min-width: 0; display: flex; flex-direction: column; border-right: 2px solid #8e8e8e; padding-right: 4px; }
.work { flex: 1; min-height: 0; display: flex; }
.drawbar { flex: none; width: 20px; align-self: flex-start; display: flex; flex-direction: column; align-items: flex-start; padding: 3px 0 4px 1px; border: solid #bbb; border-width: 0 2px 1px 0; background: #f6f6f6; }
.grip-h { width: 15px; height: 5px; border: solid #c4c4c4; border-width: 1px 0; }
.view { flex: 1; min-width: 0; display: flex; flex-direction: column; }
.view-row { flex: 1; min-height: 0; display: flex; }
.canvas { flex: 1; min-width: 0; background: #000; border-left: 1px solid #777; }
.drawing { width: 100%; height: 100%; }
.axis { font: 11px "Liberation Sans", sans-serif; fill: #ccc; }
.vscroll { flex: none; width: 13px; display: flex; flex-direction: column; align-items: center; padding: 6px 0 4px; background: #f0f0f0; gap: 5px; }
.tri { flex: none; width: 5px; height: 3px; background: #333; clip-path: polygon(0 100%, 100% 100%, 50% 0); }
.tri.down { clip-path: polygon(0 0, 100% 0, 50% 100%); }
.tri.lf, .tri.rt { width: 3px; height: 5px; clip-path: polygon(0 50%, 100% 0, 100% 100%); }
.tri.rt { clip-path: polygon(0 0, 100% 50%, 0 100%); }
.end { margin-top: auto; }
.thumb { flex: none; width: 11px; height: 11px; border: 1px solid #a9a9a9; border-radius: 1px; background: linear-gradient(90deg, #fafafa, #cfcfcf); }
.tabs { display: flex; align-items: center; height: 13px; padding-right: 12px; background: #f0f0f0; border-top: 1px solid #888; }
.tn { width: 10px; height: 11px; border-right: 1px solid #c0c0c0; background: #fafafa; }
.tn svg { width: 9px; height: 9px; }
.tab { height: 12px; padding: 0 4px; }
.tab.active { padding: 0 8px; color: #fff; background: #000; font-weight: 700; clip-path: polygon(0 0, 100% 0, 84% 100%, 16% 100%); }
.slash { width: 5px; height: 12px; }
.hscroll { display: flex; align-items: center; justify-content: space-between; height: 12px; background: #ececec; }
.hs-view { width: 222px; margin-left: auto; padding: 0 4px 0 8px; border-left: 2px solid #fff; }
.hs-view .thumb { margin-left: 20px; }

/* command window */
.cmd { display: flex; margin-top: 4px; padding: 5px 4px 1px; border-top: 2px solid #8e8e8e; }
.cmd-grip { height: 74px; margin-right: 3px; }
.cmd-body { flex: 1; min-width: 0; border: solid #888; border-width: 1px 0 0 1px; }
.hist { display: flex; background: #fff; border-bottom: 1px solid #bbb; }
.lines { flex: 1; padding: 0 0 0 1px; font-size: 12px; color: #333; font-family: "Noto Sans CJK SC", sans-serif; }
.lines p { height: 12px; line-height: 12px; white-space: nowrap; }
code { font-family: "Liberation Mono", monospace; font-size: 9px; line-height: 1; white-space: pre; }
.vs-cmd { width: 12px; padding: 6px 0 3px; }
.prompt { display: flex; align-items: center; height: 13px; padding-right: 12px; background: linear-gradient(90deg, #fff calc(100% - 60px), #f0f0f0 0); font-family: "Noto Sans CJK SC", sans-serif; font-size: 12px; color: #333; }
.prompt label { padding-left: 1px; }
.prompt input { flex: 1; min-width: 0; height: 13px; }
.hs-cmd { width: 50px; padding: 0 7px 0 5px; background: #f0f0f0; }
.hs-cmd .thumb { margin-right: 9px; }

/* dashboard */
.dash { flex: none; width: 311px; padding: 0 1px 0 2px; background: #ebebeb; }
.dash-head { display: flex; align-items: center; gap: 3px; height: 14px; padding: 1px 4px 0 5px; background: #f0f0f0; }
.dash-head i { flex: 1; height: 5px; border: solid #aaa; border-width: 1px 0; }
.dash-head button { width: 8px; height: 8px; border: 1px solid #555; border-radius: 2px; }
.dash-head svg { width: 7px; height: 7px; }
.panel { border: 1px solid #b4b7bd; border-bottom-width: 0; background: linear-gradient(90deg, #d6d6d6 15px, #ebebeb 15px); }
.sec { position: relative; padding: 2px 2px 2px 38px; border-bottom: 1px solid #b4b7bd; }
.head { position: absolute; left: 2px; top: 2px; width: 17px; height: 17px; }
.row { display: flex; align-items: center; height: 18px; }
.row:nth-child(3) { height: 19px; }
.row .combo { flex: 1; height: 16px; }
.row button { width: 16px; }
.row .combo svg { width: 12px; height: 12px; }
.row .combo svg.sw { width: 9px; }
.row .mono select { padding-bottom: 1px; }
.tools { justify-content: flex-end; margin-left: -22px; }
.row-lead { margin-left: -16px; }
.tools .sep { margin: 0; height: 16px; }
.more { width: 5px; height: 3px; margin: 10px 0 0 0; background: #222; clip-path: polygon(0 0, 100% 0, 50% 100%); }
.combo.off { background: #ececec; border-color: #b8b8b8; }
.combo.off::after { background: #999; }

/* status */
.status { display: flex; align-items: center; gap: 3px; height: 18px; padding: 0 2px 0 3px; background: #f1eded; border-top: 2px solid #c9c9c9; border-bottom: 1px solid #777; }
.coords { width: 136px; height: 13px; padding-left: 1px; border: 1px solid #c9c5c5; border-width: 1px 1px 0 0; font-family: "Liberation Sans", sans-serif; margin-right: 1px; white-space: nowrap; }
.status > button { height: 13px; border: 1px solid; border-color: #fff #c5c1c1 #c5c1c1 #fff; font-weight: 500; color: #111; }
.status > .on { border-color: #555 #eee #eee #555; margin-right: 1px; }
.annot { display: flex; align-items: center; gap: 4px; margin-left: auto; }
.annot svg { width: 13px; height: 13px; }
.annot button { gap: 2px; }
.ratio { margin: 0 4px 0 5px; }
.lockbtn { width: 17px; height: 14px; border: 1px solid #c5c1c1; }
.full { width: 12px; height: 11px; margin-left: 4px; border: 2px solid #4e86bd; background: #c8def2; }

/* taskbar */
.taskbar { display: flex; align-items: center; height: 29px; background: linear-gradient(90deg, #46382d, #3a2b20 35%, #36281b 58%, #4b3720 68%, #3c2c1c 80%, #463322); color: #fff; }
.start { width: 40px; height: 28px; }
.start svg { width: 28px; height: 28px; }
.pin { width: 50px; height: 28px; }
.pin svg { width: 25px; height: 25px; }
.task { width: 115px; height: 27px; justify-content: flex-start; gap: 4px; padding-left: 5px; margin-right: 3px; border: 1px solid #9c9186; border-radius: 2px; background: linear-gradient(90deg, #766b61, #54483e); }
.task svg { width: 24px; height: 24px; }
.cur { background: linear-gradient(90deg, #b0aaa4, #8f8780); border-color: #d0cbc6; }
.tray { display: flex; align-items: center; gap: 5px; margin-left: auto; }
.tray svg { width: 13px; height: 14px; }
.clock { display: flex; flex-direction: column; align-items: center; width: 59px; line-height: 13px; padding: 0 3px; }
.peek { width: 10px; height: 28px; border: 1px solid #8d8073; background: #55473b; }

/* overlays */
.ball { position: absolute; right: -27px; bottom: 34px; width: 34px; height: 34px; border-radius: 50%; background: #2ec72e; border: 1px solid #1c8f1c; }
.mark { position: absolute; right: 44px; bottom: 17px; width: 190px; height: 96px; pointer-events: none; }
.mark-ink { fill: #fafafa; stroke: #cfcfcf; stroke-width: 2; paint-order: stroke; }
.m-bai { font: 700 40px "Liberation Sans", sans-serif; }
.m-cn { font: 700 30px "Noto Sans CJK SC", sans-serif; }
.m-du { font: 700 24px "Liberation Sans", sans-serif; fill: #d2d2d2; }
.m-url { font: 22px "Noto Sans", sans-serif; fill: #fff; fill-opacity: .8; }
```
